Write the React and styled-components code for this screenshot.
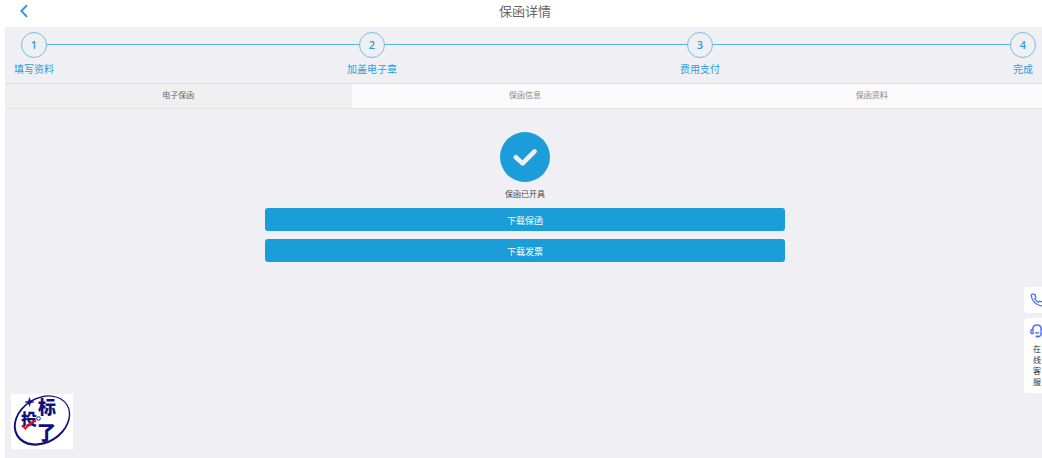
import React from "react";
import styled, { createGlobalStyle } from "styled-components";

const STEPS = ["填写资料", "加盖电子章", "费用支付", "完成"];
const TABS = ["电子保函", "保函信息", "保函资料"];

const App = () => {
  const [activeTab, setActiveTab] = React.useState(0);

  return (
    <>
      <GlobalStyle />
      <Page>
        <Header>
          <BackButton type="button" aria-label="返回">
            <svg width="8" height="14" viewBox="0 0 8 14" fill="none">
              <path d="M7 1.2 1.4 7 7 12.8" stroke="#2f94e8" strokeWidth="1.9" />
            </svg>
          </BackButton>
          <Title>保函详情</Title>
        </Header>
        <StepList>
          {STEPS.map((label, index) => (
            <StepItem key={label}>
              <StepContent>
                <StepNumber>{index + 1}</StepNumber>
                <span>{label}</span>
              </StepContent>
            </StepItem>
          ))}
        </StepList>
        <TabBar role="tablist">
          {TABS.map((label, index) => (
            <Tab
              key={label}
              type="button"
              role="tab"
              aria-selected={index === activeTab}
              $active={index === activeTab}
              onClick={() => setActiveTab(index)}
            >
              {label}
            </Tab>
          ))}
        </TabBar>
        <Result>
          <svg width="50" height="50" viewBox="0 0 50 50" fill="none">
            <circle cx="25" cy="25" r="25" fill="#1b9dd9" />
            <path
              d="M15.8 25.2 22.6 31.4 34.6 19.4"
              stroke="#f0eff4"
              strokeWidth="4.6"
              strokeLinecap="round"
              strokeLinejoin="round"
            />
          </svg>
          <ResultText>保函已开具</ResultText>
          <Actions>
            <ActionButton type="button">下载保函</ActionButton>
            <ActionButton type="button">下载发票</ActionButton>
          </Actions>
        </Result>
      </Page>
      <Logo />
      <ServiceBar>
        <ServiceButton type="button" aria-label="电话">
          <PhoneIcon />
        </ServiceButton>
        <ServiceButton type="button">
          <HeadsetIcon />
          <ServiceText>在线客服</ServiceText>
        </ServiceButton>
      </ServiceBar>
    </>
  );
};

const PhoneIcon = () => (
  <svg width="14" height="14" viewBox="0 0 24 24" fill="none" stroke="#4e6ef2" strokeWidth="2.2" strokeLinejoin="round">
    <path d="M22 16.92v3a2 2 0 0 1-2.18 2 19.8 19.8 0 0 1-8.63-3.07 19.5 19.5 0 0 1-6-6A19.8 19.8 0 0 1 2.12 4.18 2 2 0 0 1 4.11 2h3a2 2 0 0 1 2 1.72c.13.96.36 1.9.7 2.81a2 2 0 0 1-.45 2.11L8.09 9.91a16 16 0 0 0 6 6l1.27-1.27a2 2 0 0 1 2.11-.45c.91.34 1.85.57 2.81.7A2 2 0 0 1 22 16.92z" />
  </svg>
);

const HeadsetIcon = () => (
  <svg width="14" height="14" viewBox="0 0 14 14" fill="none" stroke="#4e6ef2" strokeWidth="1.3" strokeLinecap="round">
    <path d="M2.6 5.4C2.8 2.7 4.5 1 7 1s4.2 1.7 4.4 4.4" />
    <path d="M3 5.4h-.6C1.4 5.4.8 6.1.8 7.500s.6 2.200 1.600 2.200H3z" />
    <path d="M11 5.4h.6c1 0 1.600.7 1.600 2.100s-.6 2.200-1.600 2.200H11z" />
    <path d="M5.4 8.600c.9.7 2.300.7 3.200 0M11.400 9.800c-.3 1.600-1.400 2.600-3.200 2.800" />
    <path d="M6.6 12.600H8" strokeWidth="2" />
  </svg>
);

const Logo = () => (
  <LogoLink href="#" aria-label="投标了">
    <svg width="62" height="55" viewBox="0 0 62 55" fill="none">
      {/* ring gets thicker towards the lower left */}
      <ellipse cx="31" cy="26.5" rx="30" ry="23" transform="rotate(-32 31 26.5)" fill="#10107c" />
      <ellipse cx="31.3" cy="26" rx="28.4" ry="21.2" transform="rotate(-32 31.3 26)" fill="#fff" />
      <path d="M18.5 3.500 19.500 7 23 8 19.500 9 18.5 12.500 17.500 9 14 8 17.500 7z" fill="#10107c" stroke="#10107c" strokeWidth=".5" />
      <LogoGlyph x="10" y="31" fontSize="16">投</LogoGlyph>
      <LogoGlyph x="27" y="20" fontSize="18">标</LogoGlyph>
      <LogoGlyph x="26" y="46" fontSize="19">了</LogoGlyph>
      <path d="M11 31.5 14.500 34.500C17 31 20 28.500 25 26.500" stroke="#e8141c" strokeWidth="2" />
      <circle cx="27.500" cy="24.500" r="1.800" fill="#fff" stroke="#10107c" />
    </svg>
  </LogoLink>
);

const GlobalStyle = createGlobalStyle`
  * {
    box-sizing: border-box;
  }
  body {
    margin: 0;
    background: #fff;
    overflow-x: hidden;
    font-family: "Open Sans", "Noto Sans CJK SC", sans-serif;
  }
  button {
    border: 0;
    padding: 0;
    font-family: inherit;
    cursor: pointer;
  }
  svg {
    display: block;
  }
`;

const Page = styled.div`
  display: flex;
  flex-direction: column;
  min-height: 100vh;
  margin: 0 -3px 0 5px;
  background: #f0eff4;
`;

const Header = styled.header`
  display: grid;
  grid-template-columns: 1fr auto 1fr;
  align-items: center;
  height: 27px;
  padding: 0 15px 6px;
  background: #fff;
`;

const BackButton = styled.button`
  justify-self: start;
  background: none;
`;

const Title = styled.h1`
  margin: 0;
  font-size: 13px;
  line-height: 18px;
  font-weight: 400;
  color: #666;
`;

const StepList = styled.ol`
  display: flex;
  margin: 0;
  padding: 5px 12px 7px 9px;
  list-style: none;
`;

const StepItem = styled.li`
  position: relative;
  flex: 1;

  &:last-child {
    flex: none;
  }
  /* connecting line, hidden behind the circles at both ends */
  &:not(:last-child)::after {
    content: "";
    position: absolute;
    top: 12px;
    left: 20px;
    right: -13px;
    height: 1px;
    background: #5ab4e0;
  }
`;

const StepContent = styled.div`
  display: inline-flex;
  flex-direction: column;
  align-items: center;
  vertical-align: top;
  font-size: 10px;
  line-height: 14px;
  color: #2c9fd8;
`;

const StepNumber = styled.span`
  position: relative;
  z-index: 1;
  width: 26px;
  height: 26px;
  margin: 0 -3px 4px;
  border: 1px solid #72bfe5;
  border-radius: 50%;
  background: #f0eff4;
  font-size: 11px;
  font-weight: 600;
  line-height: 24px;
  text-align: center;
`;

const TabBar = styled.div`
  display: flex;
  border-top: 1px solid #dcdcdf;
  border-bottom: 1px solid #e4e4e7;
`;

const Tab = styled.button`
  flex: 1;
  height: 24px;
  padding-bottom: 2px;
  background: ${({ $active }) => ($active ? "#f0f0f0" : "#fafafa")};
  color: ${({ $active }) => ($active ? "#666" : "#888")};
  font-size: 8px;
  line-height: 12px;
`;

const Result = styled.main`
  display: flex;
  flex-direction: column;
  align-items: center;
  padding-top: 23px;
`;

const ResultText = styled.p`
  margin: 6px 0 8px;
  font-size: 8px;
  line-height: 12px;
  color: #444;
`;

const Actions = styled.div`
  display: flex;
  flex-direction: column;
  gap: 8px;
  width: 50%;
`;

const ActionButton = styled.button`
  height: 23px;
  padding-top: 2px;
  border-radius: 3px;
  background: #1b9dd9;
  color: #fff;
  font-size: 9px;
  line-height: 14px;
`;

const LogoLink = styled.a`
  position: fixed;
  left: 11px;
  bottom: 9px;
  background: #fff;
`;

const LogoGlyph = styled.text`
  font-weight: 900;
  fill: #10107c;
`;

const ServiceBar = styled.aside`
  position: fixed;
  right: -8px;
  bottom: 65px;
  display: flex;
  flex-direction: column;
  gap: 5px;
  width: 26px;
`;

const ServiceButton = styled.button`
  display: flex;
  flex-direction: column;
  align-items: center;
  gap: 5px;
  padding: 6px 0;
  border-radius: 4px;
  background: #fff;
`;

const ServiceText = styled.span`
  width: 8px;
  font-size: 8px;
  line-height: 11px;
  color: #333;
`;

export default App;
